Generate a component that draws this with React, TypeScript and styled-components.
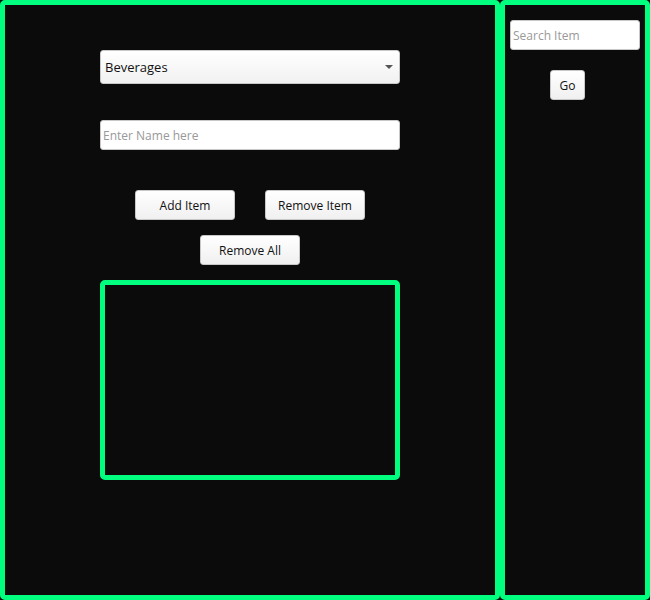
import React from "react";
import styled, { createGlobalStyle } from "styled-components";

const GREEN = "#00ff7f";

const Global = createGlobalStyle`
  html, body { margin: 0; padding: 0; background: #0b0b0b; }
  body { font-family: "Open Sans", "Noto Sans", sans-serif; }
  * { box-sizing: border-box; }
`;

const Page = styled.div`
  display: flex;
  width: 650px;
  height: 600px;
  background: #0b0b0b;
`;

const Panel = styled.div<{ $w: number }>`
  width: ${(p) => p.$w}px;
  height: 600px;
  border: 5px solid ${GREEN};
  border-radius: 5px;
  background: #0b0b0b;
  display: flex;
  flex-direction: column;
  align-items: center;
`;

const MainPanel = styled(Panel)`
  padding-top: 45px;
`;

const SidePanel = styled(Panel)`
  padding-top: 15px;
`;

const SelectWrap = styled.div`
  position: relative;
  width: 300px;
  height: 34px;
`;

const Select = styled.select`
  appearance: none;
  -webkit-appearance: none;
  width: 100%;
  height: 100%;
  border: 1px solid #c8c8c8;
  border-radius: 3px;
  background: linear-gradient(#ffffff, #f1f1f1);
  font-family: "Open Sans", "Noto Sans", sans-serif;
  font-size: 13px;
  color: #111;
  padding: 0 0 0 4px;
  outline: none;
`;

const Arrow = styled.span`
  position: absolute;
  right: 7px;
  top: 15px;
  width: 0;
  height: 0;
  border-left: 4px solid transparent;
  border-right: 4px solid transparent;
  border-top: 4px solid #555;
  pointer-events: none;
`;

const TextInput = styled.input<{ $w: number; $mt: number }>`
  width: ${(p) => p.$w}px;
  height: 30px;
  margin-top: ${(p) => p.$mt}px;
  border: 1px solid #c8c8c8;
  border-radius: 3px;
  background: #fff;
  font-family: "Open Sans", "Noto Sans", sans-serif;
  font-size: 12px;
  color: #111;
  padding: 0 2px;
  outline: none;
  &::placeholder { color: #999; }
`;

const ButtonRow = styled.div<{ $mt: number; $shift?: number }>`
  display: flex;
  gap: 30px;
  margin-top: ${(p) => p.$mt}px;
  margin-right: ${(p) => (p.$shift ?? 0) * 2}px;
`;

const Button = styled.button<{ $w: number }>`
  width: ${(p) => p.$w}px;
  height: 30px;
  border: 1px solid #c8c8c8;
  border-radius: 3px;
  background: linear-gradient(#ffffff, #f0f0f0);
  font-family: "Open Sans", "Noto Sans", sans-serif;
  font-size: 12px;
  color: #111;
  padding: 0;
  cursor: pointer;
`;

const ListBox = styled.div`
  width: 300px;
  height: 200px;
  margin-top: 15px;
  border: 5px solid ${GREEN};
  border-radius: 5px;
`;

export default function App() {
  return (
    <>
      <Global />
      <Page>
        <MainPanel $w={500}>
          <SelectWrap>
            <Select defaultValue="Beverages">
              <option>Beverages</option>
              <option>Snacks</option>
              <option>Dairy</option>
            </Select>
            <Arrow />
          </SelectWrap>
          <TextInput $w={300} $mt={36} placeholder="Enter Name here" />
          <ButtonRow $mt={40}>
            <Button $w={100}>Add Item</Button>
            <Button $w={100}>Remove Item</Button>
          </ButtonRow>
          <ButtonRow $mt={15}>
            <Button $w={100}>Remove All</Button>
          </ButtonRow>
          <ListBox />
        </MainPanel>
        <SidePanel $w={150}>
          <TextInput $w={130} $mt={0} placeholder="Search Item" />
          <ButtonRow $mt={20} $shift={7.5}>
            <Button $w={35}>Go</Button>
          </ButtonRow>
        </SidePanel>
      </Page>
    </>
  );
}
